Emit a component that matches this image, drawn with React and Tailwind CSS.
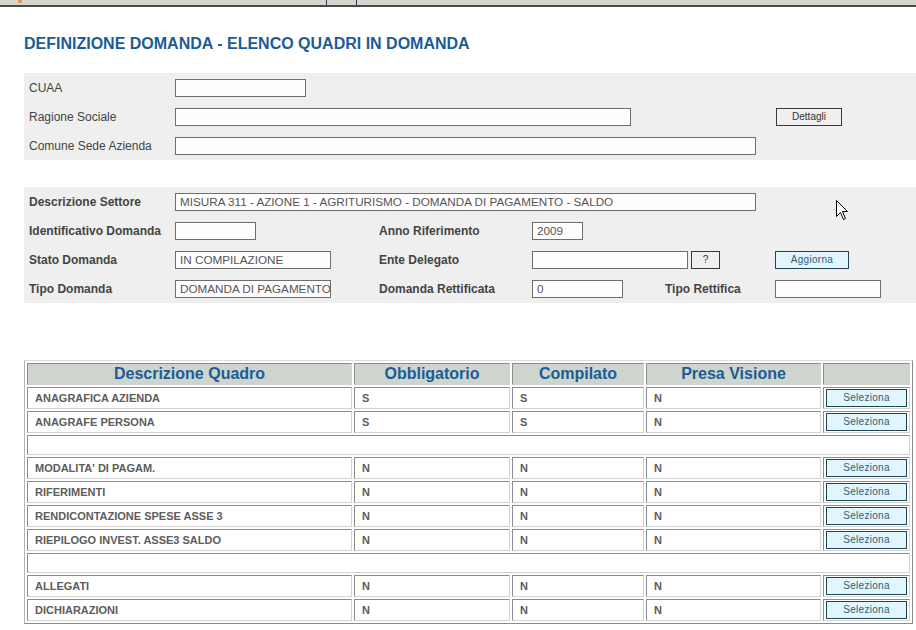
import React from 'react';

const rows = [
  { name: 'ANAGRAFICA AZIENDA', obb: 'S', comp: 'S', presa: 'N' },
  { name: 'ANAGRAFE PERSONA', obb: 'S', comp: 'S', presa: 'N' },
  null,
  { name: "MODALITA' DI PAGAM.", obb: 'N', comp: 'N', presa: 'N' },
  { name: 'RIFERIMENTI', obb: 'N', comp: 'N', presa: 'N' },
  { name: 'RENDICONTAZIONE SPESE ASSE 3', obb: 'N', comp: 'N', presa: 'N' },
  { name: 'RIEPILOGO INVEST. ASSE3 SALDO', obb: 'N', comp: 'N', presa: 'N' },
  null,
  { name: 'ALLEGATI', obb: 'N', comp: 'N', presa: 'N' },
  { name: 'DICHIARAZIONI', obb: 'N', comp: 'N', presa: 'N' },
];

function Field({ w, children }) {
  return (
    <div
      className={`${w} h-[18px] border border-[#6e6e6e] bg-[#fffdfd] px-[4px] text-[11.7px] leading-[16px] text-[#555] whitespace-nowrap overflow-hidden`}
    >
      {children}
    </div>
  );
}

function GrayButton({ w, children }) {
  return (
    <div
      className={`${w} h-[18px] border border-[#3a3a3a] bg-[#efefef] text-[10px] leading-[16px] text-[#333] text-center`}
    >
      {children}
    </div>
  );
}

function BlueButton({ w, children }) {
  return (
    <div
      className={`${w} h-[18px] border border-[#1f4453] bg-[#e1f5fc] text-[10px] leading-[16px] tracking-[0.3px] text-[#2d5f78] text-center`}
    >
      {children}
    </div>
  );
}

const td = 'border border-t-[#8c8c8c] border-l-[#8c8c8c] border-b-[#d2d2d2] border-r-[#d2d2d2]';

export default function App() {
  return (
    <div className="relative w-[916px] h-[630px] bg-white overflow-hidden font-['Liberation_Sans',Arial,sans-serif]">
      {/* top browser strip */}
      <div className="relative h-[7px] bg-[#d8d5d0] border-b-2 border-[#4a4a4a]">
        <div className="absolute left-[326px] top-0 h-full w-px bg-[#3a3a3a]" />
        <div className="absolute left-[356px] top-0 h-full w-px bg-[#3a3a3a]" />
        <div className="absolute left-[18px] top-0 h-[3px] w-[4px] bg-[#e49a5a]" />
      </div>

      <h1 className="ml-[24px] mt-[28px] text-[16px] leading-[18px] font-bold text-[#1b5c98]">
        DEFINIZIONE DOMANDA - ELENCO QUADRI IN DOMANDA
      </h1>

      {/* panel 1 */}
      <div className="ml-[24px] mt-[20px] bg-[#efefef] text-[12px] text-[#444]">
        <div className="flex items-center h-[29px]">
          <div className="w-[151px] pl-[5px]">CUAA</div>
          <Field w="w-[131px]" />
        </div>
        <div className="flex items-center h-[29px]">
          <div className="w-[151px] pl-[5px]">Ragione Sociale</div>
          <Field w="w-[456px]" />
          <div className="ml-[145px]">
            <GrayButton w="w-[66px]">Dettagli</GrayButton>
          </div>
        </div>
        <div className="flex items-center h-[29px]">
          <div className="w-[151px] pl-[5px]">Comune Sede Azienda</div>
          <Field w="w-[581px]" />
        </div>
      </div>

      {/* panel 2 */}
      <div className="ml-[24px] mt-[27px] bg-[#efefef] text-[12px] font-bold text-[#444]">
        <div className="flex items-center h-[29px]">
          <div className="w-[151px] pl-[5px]">Descrizione Settore</div>
          <div className="font-normal">
            <Field w="w-[581px]">MISURA 311 - AZIONE 1 - AGRITURISMO - DOMANDA DI PAGAMENTO - SALDO</Field>
          </div>
        </div>
        <div className="flex items-center h-[29px]">
          <div className="w-[151px] pl-[5px]">Identificativo Domanda</div>
          <div className="w-[204px] font-normal">
            <Field w="w-[81px]" />
          </div>
          <div className="w-[153px]">Anno Riferimento</div>
          <div className="font-normal">
            <Field w="w-[51px]">2009</Field>
          </div>
        </div>
        <div className="flex items-center h-[29px]">
          <div className="w-[151px] pl-[5px]">Stato Domanda</div>
          <div className="w-[204px] font-normal">
            <Field w="w-[156px]">IN COMPILAZIONE</Field>
          </div>
          <div className="w-[153px]">Ente Delegato</div>
          <div className="w-[243px] flex items-center gap-[3px] font-normal">
            <Field w="w-[156px]" />
            <GrayButton w="w-[29px]">?</GrayButton>
          </div>
          <div className="font-normal">
            <BlueButton w="w-[74px]">Aggiorna</BlueButton>
          </div>
        </div>
        <div className="flex items-center h-[29px]">
          <div className="w-[151px] pl-[5px]">Tipo Domanda</div>
          <div className="w-[204px] font-normal">
            <Field w="w-[156px]">DOMANDA DI PAGAMENTO</Field>
          </div>
          <div className="w-[153px]">Domanda Rettificata</div>
          <div className="w-[133px] font-normal">
            <Field w="w-[91px]">0</Field>
          </div>
          <div className="w-[110px]">Tipo Rettifica</div>
          <div className="font-normal">
            <Field w="w-[106px]" />
          </div>
        </div>
      </div>

      {/* table */}
      <table className="ml-[24px] mt-[57px] w-[889px] table-fixed border-separate border-spacing-[2px] border border-t-[#dcdcdc] border-l-[#b4b4b4] border-b-[#8c8c8c] border-r-[#8c8c8c]">
        <colgroup>
          <col className="w-[325px]" />
          <col className="w-[156px]" />
          <col className="w-[132px]" />
          <col className="w-[175px]" />
          <col className="w-[87px]" />
        </colgroup>
        <thead>
          <tr className="h-[22px]">
            {['Descrizione Quadro', 'Obbligatorio', 'Compilato', 'Presa Visione', ''].map((h, i) => (
              <th
                key={i}
                className={`${td} bg-[#cdd5cc] p-0 text-[16px] leading-[18px] font-bold text-[#1b5c98] text-center`}
              >
                {h}
              </th>
            ))}
          </tr>
        </thead>
        <tbody>
          {rows.map((r, i) =>
            r ? (
              <tr key={i} className="h-[22px] text-[11px] font-bold text-[#5c5c5c]">
                <td className={`${td} p-0 pl-[7px]`}>{r.name}</td>
                <td className={`${td} p-0 pl-[7px]`}>{r.obb}</td>
                <td className={`${td} p-0 pl-[7px]`}>{r.comp}</td>
                <td className={`${td} p-0 pl-[7px]`}>{r.presa}</td>
                <td className={`${td} p-0 px-[2px] font-normal`}>
                  <BlueButton w="w-full">Seleziona</BlueButton>
                </td>
              </tr>
            ) : (
              <tr key={i} className="h-[20px]">
                <td colSpan={5} className={`${td} p-0`} />
              </tr>
            )
          )}
        </tbody>
      </table>

      {/* mouse pointer */}
      <svg className="absolute left-[836px] top-[200px]" width="13" height="21" viewBox="0 0 13 21">
        <path d="M0.5 0.5 L0.5 16.5 L4.5 12.5 L7.5 19.5 L9.5 18.5 L6.5 11.5 L11.5 11.5 Z" fill="#fff" stroke="#000" strokeWidth="1" />
      </svg>
    </div>
  );
}
